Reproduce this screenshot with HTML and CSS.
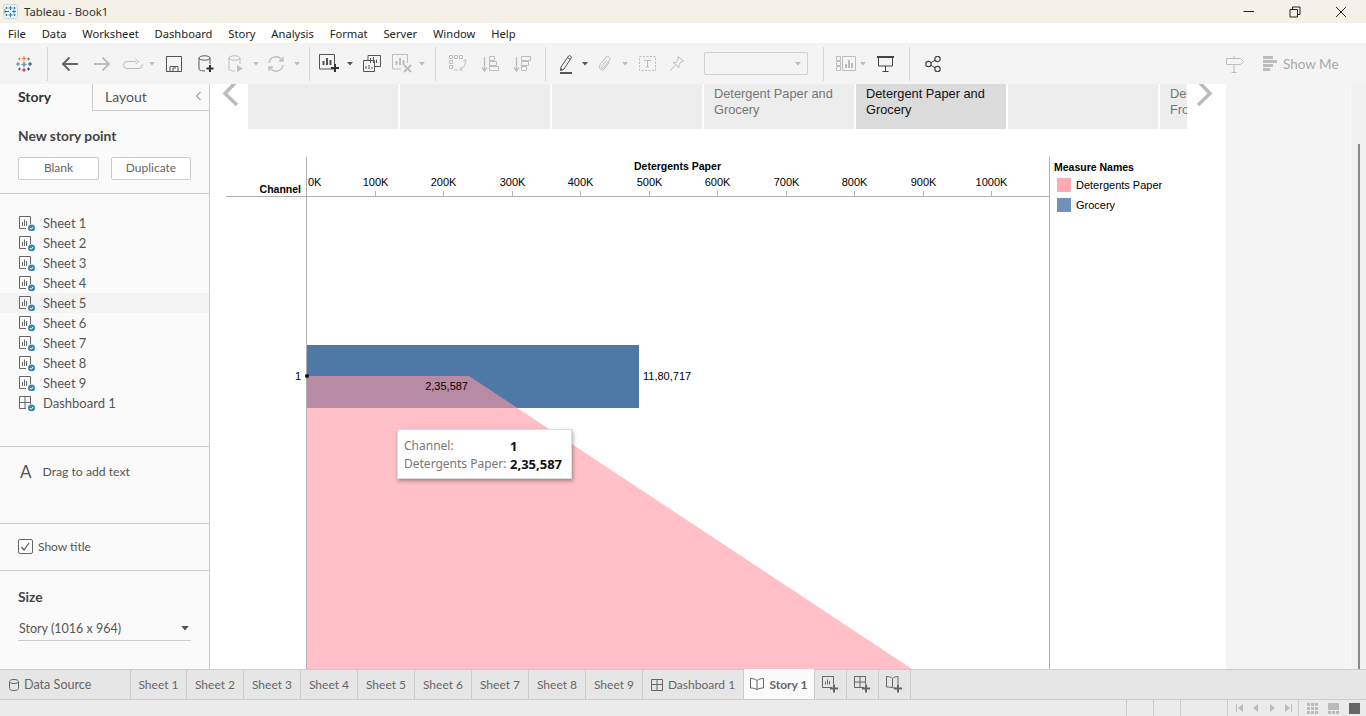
FILE: index.html
```html
<!DOCTYPE html>
<html lang="en">
<head>
  <meta charset="UTF-8">
  <title>Tableau - Book1</title>
  <link rel="stylesheet" href="styles.css">
</head>
<body>
  <svg class="defs" width="0" height="0">
    <defs>
      <symbol id="sheet-ok" viewBox="0 0 18 16">
        <path d="M12.500 9V1.500H1.500V13.500H8" fill="none" stroke="#666"/>
        <path d="M4.500 7v4M6.500 4.500v6.500M8.500 6v5" fill="none" stroke="#666"/>
        <circle cx="13.500" cy="13" r="3.500" fill="#3b84a6"/>
        <path d="M11.800 13l1.300 1.300 2.200-2.400" fill="none" stroke="#fff"/>
      </symbol>
      <symbol id="dash-ok" viewBox="0 0 18 16">
        <path d="M12.500 9V1.500H1.500V13.500H8M7 1.500V13.500M1.500 7.500H12.500" fill="none" stroke="#666"/>
        <circle cx="13.500" cy="13" r="3.500" fill="#3b84a6"/>
        <path d="M11.800 13l1.300 1.300 2.200-2.400" fill="none" stroke="#fff"/>
      </symbol>
      <symbol id="caret" viewBox="0 0 6 4">
        <path d="M0 0h6L3 3.500z" fill="currentColor"/>
      </symbol>
    </defs>
  </svg>

  <header class="titlebar">
    <div class="title">
      <svg class="title-logo" width="15" height="15" viewBox="0 0 15 15">
        <rect x="0.500" y="0.500" width="14" height="14" rx="2" fill="#eef5fa" stroke="#c9dbe6"/>
        <path d="M7.500 2v4M5.500 4h4M7.500 9v4M5.500 11h4M2 7.500h4M2 5.500v4M9 7.500h4M11 5.500v4M3.500 3v2M2.500 4h2M11.500 3v2M10.500 4h2M3.500 10v2M2.500 11h2M11.500 10v2M10.500 11h2" stroke="#2f7fa8" fill="none"/>
      </svg>
      <span>Tableau - Book1</span>
    </div>
    <div class="win-controls">
      <svg width="12" height="12" viewBox="0 0 12 12"><path d="M0.500 5.500H11" stroke="#222" fill="none"/></svg>
      <svg width="12" height="12" viewBox="0 0 12 12"><path d="M1 3.500h7.500v7.500H1zM3.500 3.500V1H11v7.500H8.500" stroke="#222" fill="none"/></svg>
      <svg width="12" height="12" viewBox="0 0 12 12"><path d="M1 1l10 10M11 1L1 11" stroke="#222" fill="none"/></svg>
    </div>
  </header>

  <nav class="menubar">
    <span>File</span><span>Data</span><span>Worksheet</span><span>Dashboard</span><span>Story</span><span>Analysis</span><span>Format</span><span>Server</span><span>Window</span><span>Help</span>
  </nav>

  <div class="toolbar">
    <svg width="18" height="18" viewBox="0 0 18 18">
      <path d="M9 1v5M7 3.500h4" stroke="#e8762b" fill="none"/>
      <path d="M9 7v5M6.500 9.500h5" stroke="#7b8cb0" stroke-width="1.500" fill="none"/>
      <path d="M9 13v4M7 15h4" stroke="#c72035" fill="none"/>
      <path d="M3 7v4M1 9h4" stroke="#59879b" fill="none"/>
      <path d="M15 7v4M13 9h4" stroke="#1f447a" fill="none"/>
      <path d="M4.500 2.500v3M3 4h3" stroke="#eb912b" fill="none"/>
      <path d="M13.500 2.500v3M12 4h3" stroke="#5b879b" fill="none"/>
      <path d="M4.500 12.500v3M3 14h3" stroke="#5c6692" fill="none"/>
      <path d="M13.500 12.500v3M12 14h3" stroke="#1f447a" fill="none"/>
    </svg>
    <i class="sep"></i>
    <svg width="18" height="16" viewBox="0 0 18 16"><path d="M17 8H2M8.500 1.500L2 8l6.500 6.500" stroke="#666" stroke-width="2" fill="none"/></svg>
    <svg width="18" height="16" viewBox="0 0 18 16"><path d="M1 8h15M9.500 1.500L16 8l-6.500 6.500" stroke="#bdbdbd" stroke-width="2" fill="none"/></svg>
    <svg width="20" height="12" viewBox="0 0 20 12"><path d="M13 3.500H4a3 3 0 0 0 0 7h12a3 3 0 0 0 3-3V6M12.500 1l3 2.500-3 2.500" stroke="#bdbdbd" fill="none"/></svg>
    <svg class="caret off" width="6" height="4"><use href="#caret"/></svg>
    <svg width="16" height="16" viewBox="0 0 16 16"><path d="M0.500 0.500h15v15h-15zM4 15.500v-5h8v5M7 15v-3h3" stroke="#555" fill="none"/></svg>
    <svg width="16" height="18" viewBox="0 0 16 18"><ellipse cx="6.500" cy="3" rx="5.500" ry="2.200" stroke="#555" fill="none"/><path d="M1 3v11c0 1 2 2 6 2M12 3v6" stroke="#555" fill="none"/><path d="M12 10v7M8.500 13.500h7" stroke="#333" stroke-width="2" fill="none"/></svg>
    <svg width="16" height="18" viewBox="0 0 16 18"><ellipse cx="6.500" cy="3" rx="5.500" ry="2.200" stroke="#bdbdbd" fill="none"/><path d="M1 3v11c0 1 2 2 6 2M12 3v6" stroke="#bdbdbd" fill="none"/><path d="M9 10l6 3.500-6 3.500z" fill="#bdbdbd"/></svg>
    <svg class="caret off" width="6" height="4"><use href="#caret"/></svg>
    <svg width="18" height="18" viewBox="0 0 18 18"><path d="M2 8a7 7 0 0 1 12-4l2 2M16 10a7 7 0 0 1-12 4l-2-2M16 2v4h-4M2 16v-4h4" stroke="#bdbdbd" stroke-width="1.300" fill="none"/></svg>
    <svg class="caret off" width="6" height="4"><use href="#caret"/></svg>
    <i class="sep"></i>
    <svg width="22" height="19" viewBox="0 0 22 19"><path d="M15.500 15H0.500V0.500H15.500V10" stroke="#555" fill="none"/><path d="M4.500 11V7M8 11V4M11.500 11V6" stroke="#555" stroke-width="2" fill="none"/><path d="M16 10v8M12 14h8" stroke="#333" stroke-width="2" fill="none"/></svg>
    <svg class="caret" width="6" height="4"><use href="#caret"/></svg>
    <svg width="18" height="17" viewBox="0 0 18 17"><path d="M5 5V0.500h12.500v11H12M7.500 8V3M10.500 8V2M13.500 8V4.500" stroke="#555" fill="none"/><path d="M0.500 5.500h11v11h-11zM3 14v-3M6 14v-4M9 14v-2" stroke="#555" fill="none"/></svg>
    <svg width="21" height="19" viewBox="0 0 21 19"><path d="M15.500 9V0.500H0.500V15H9" stroke="#bdbdbd" fill="none"/><path d="M4.500 11V7M8 11V4M11.500 11V6" stroke="#bdbdbd" stroke-width="2" fill="none"/><path d="M12 11l7 7M19 11l-7 7" stroke="#bdbdbd" stroke-width="2" fill="none"/></svg>
    <svg class="caret off" width="6" height="4"><use href="#caret"/></svg>
    <i class="sep"></i>
    <svg width="18" height="18" viewBox="0 0 18 18"><path d="M0.500 0.500h3v3h-3zM5.500 0.500h3v3h-3zM10.500 0.500h3v3h-3zM0.500 5.500h3v3h-3zM0.500 10.500h3v3h-3zM5.500 15h3M16 5c1 4-1 8-5 9.500M13 12l-2 2.500 2.500 1.500M14 6.500L16 4.500l2 2" stroke="#bdbdbd" fill="none"/></svg>
    <svg width="18" height="16" viewBox="0 0 18 16"><path d="M3.500 1v13M1 11.500L3.500 15 6 11.500" stroke="#bdbdbd" stroke-width="1.300" fill="none"/><path d="M8.500 0.500h5v4h-5zM8.500 5.500h7v4h-7zM8.500 10.500h9v4h-9z" stroke="#bdbdbd" fill="none"/></svg>
    <svg width="18" height="16" viewBox="0 0 18 16"><path d="M3.500 1v13M1 11.500L3.500 15 6 11.500" stroke="#bdbdbd" stroke-width="1.300" fill="none"/><path d="M8.500 0.500h9v4h-9zM8.500 5.500h7v4h-7zM8.500 10.500h5v4h-5z" stroke="#bdbdbd" fill="none"/></svg>
    <i class="sep"></i>
    <svg width="14" height="20" viewBox="0 0 14 20"><path d="M2 13L9.500 2c1-1.200 3.500.5 2.700 2L5 15l-3.500 1.500zM8.500 3.500l3 2" stroke="#555" fill="none"/><path d="M1.500 14l3 2-3 .5z" fill="#555"/><path d="M1 19h12" stroke="#555" stroke-width="2" fill="none"/></svg>
    <svg class="caret" width="6" height="4"><use href="#caret"/></svg>
    <svg width="14" height="17" viewBox="0 0 14 17"><path d="M2.500 9L8 2c2-2 5 .5 3.500 3L5.500 13c-1 1.500-3 .5-2-1.200L8.500 5M2.500 9c-3 4 1 8 4 5l5-7" stroke="#bdbdbd" fill="none"/></svg>
    <svg class="caret off" width="6" height="4"><use href="#caret"/></svg>
    <svg width="17" height="15" viewBox="0 0 17 15"><rect x="0.500" y="0.500" width="16" height="14" fill="none" stroke="#bdbdbd" stroke-dasharray="2 1.500"/><path d="M5 4.500h7M8.500 4.500v6.500M7 11h3" stroke="#bdbdbd" fill="none"/></svg>
    <svg width="14" height="15" viewBox="0 0 14 15"><path d="M8 0.500l5.500 4.500-2 .5-2.500 3v3L3 6.500h3L8 3.500zM5 9.500L0.500 14.500" stroke="#bdbdbd" fill="none"/></svg>
    <div class="fit-combo"><svg class="caret off" width="6" height="4"><use href="#caret"/></svg></div>
    <i class="sep"></i>
    <svg width="20" height="15" viewBox="0 0 20 15"><path d="M0.500 0.500h4v4h-4zM0.500 5.500h4v4h-4zM0.500 10.500h4v4h-4zM6.500 0.500h13v14h-13z" stroke="#bdbdbd" fill="none"/><path d="M10 12V8M13 12V4M16 12V7" stroke="#bdbdbd" stroke-width="2" fill="none"/></svg>
    <svg class="caret off" width="6" height="4"><use href="#caret"/></svg>
    <svg width="17" height="16" viewBox="0 0 17 16"><path d="M0 0.500h17M1.500 1v9h14V1M8.500 10v5M5.500 15.500h6" stroke="#444" fill="none"/><path d="M0 1h17v1H0z" fill="#444"/></svg>
    <i class="sep"></i>
    <svg width="16" height="16" viewBox="0 0 16 16"><circle cx="3.500" cy="8" r="2.700" fill="none" stroke="#444" stroke-width="1.200"/><circle cx="12.500" cy="3" r="2.700" fill="none" stroke="#444" stroke-width="1.200"/><circle cx="12.500" cy="13" r="2.700" fill="none" stroke="#444" stroke-width="1.200"/><path d="M5.800 6.700l4.400-2.400M5.800 9.300l4.400 2.400" stroke="#444" fill="none"/></svg>
    <span></span>
    <svg width="18" height="18" viewBox="0 0 18 18"><path d="M0.500 3.500h14l3 3-3 3H0.500zM8 1v2.500M8 9.500V17M5.500 17.500h5" stroke="#bdbdbd" fill="none"/></svg>
    <div class="show-me">
      <svg width="14" height="15" viewBox="0 0 14 15"><path d="M0 0h10v3H0zM0 4h14v3H0zM0 8h10v3H0zM0 12h7v3H0z" fill="#bdbdbd"/></svg>
      <span>Show Me</span>
    </div>
  </div>

  <div class="main">
    <aside class="sidebar">
      <div class="side-tabs">
        <div class="side-tab on">Story</div>
        <div class="side-tab">Layout
          <svg width="7" height="10" viewBox="0 0 7 10"><path d="M5.500 1L1.500 5l4 4" stroke="#666" fill="none"/></svg>
        </div>
      </div>

      <section class="side-new">
        <h3>New story point</h3>
        <div class="side-btns">
          <button>Blank</button>
          <button>Duplicate</button>
        </div>
      </section>

      <ul class="sheet-list">
        <li><svg width="18" height="16"><use href="#sheet-ok"/></svg>Sheet 1</li>
        <li><svg width="18" height="16"><use href="#sheet-ok"/></svg>Sheet 2</li>
        <li><svg width="18" height="16"><use href="#sheet-ok"/></svg>Sheet 3</li>
        <li><svg width="18" height="16"><use href="#sheet-ok"/></svg>Sheet 4</li>
        <li class="hover"><svg width="18" height="16"><use href="#sheet-ok"/></svg>Sheet 5</li>
        <li><svg width="18" height="16"><use href="#sheet-ok"/></svg>Sheet 6</li>
        <li><svg width="18" height="16"><use href="#sheet-ok"/></svg>Sheet 7</li>
        <li><svg width="18" height="16"><use href="#sheet-ok"/></svg>Sheet 8</li>
        <li><svg width="18" height="16"><use href="#sheet-ok"/></svg>Sheet 9</li>
        <li><svg width="18" height="16"><use href="#dash-ok"/></svg>Dashboard 1</li>
      </ul>

      <section class="side-text">
        <span class="big-a">A</span>
        <span>Drag to add text</span>
      </section>

      <section class="side-title">
        <svg width="15" height="15" viewBox="0 0 15 15"><rect x="0.500" y="0.500" width="14" height="14" rx="1.500" fill="#fff" stroke="#666"/><path d="M3.500 8l2.500 3 5-7" stroke="#555" stroke-width="1.200" fill="none"/></svg>
        <span>Show title</span>
      </section>

      <section class="side-size">
        <h3>Size</h3>
        <div class="size-select">
          <span>Story (1016 x 964)</span>
          <svg class="caret" width="8" height="5"><use href="#caret"/></svg>
        </div>
      </section>
    </aside>

    <div class="canvas">
      <div class="story-nav">
        <svg class="nav-arrow" width="18" height="22" viewBox="0 0 18 22"><path d="M15 -3L3 9.500 15 21" stroke="#bbb" stroke-width="3.500" fill="none"/></svg>
        <div class="points">
          <div class="point"></div>
          <div class="point"></div>
          <div class="point"></div>
          <div class="point">Detergent Paper and Grocery</div>
          <div class="point on">Detergent Paper and Grocery</div>
          <div class="point"></div>
          <div class="point">Delicassen and Frozen</div>
        </div>
        <svg class="nav-arrow" width="18" height="22" viewBox="0 0 18 22"><path d="M3 -3L15 9.500 3 21" stroke="#bbb" stroke-width="3.500" fill="none"/></svg>
      </div>

      <div class="viz">
        <svg class="chart" width="1016" height="539" viewBox="210 130 1016 539">
          <rect x="307" y="345" width="332" height="63" fill="#4e79a7"/>
          <path d="M307 376H469L912 669H307Z" fill="#ff97a2" fill-opacity="0.600"/>
          <path d="M306.500 157V669M1049.500 157V669M226 196.500H1049" stroke="#b0b0b0" fill="none"/>
          <path d="M375.500 191v5M443.500 191v5M512.500 191v5M580.500 191v5M649.500 191v5M717.500 191v5M786.500 191v5M854.500 191v5M923.500 191v5M991.500 191v5" stroke="#b0b0b0" fill="none"/>
          <circle cx="307" cy="376" r="2" fill="#111"/>
          <g class="lbl">
            <text class="b" x="677.500" y="170" text-anchor="middle">Detergents Paper</text>
            <text class="b" x="301" y="193" text-anchor="end">Channel</text>
            <text x="308" y="186">0K</text>
            <text x="375.500" y="186" text-anchor="middle">100K</text>
            <text x="443.500" y="186" text-anchor="middle">200K</text>
            <text x="512.500" y="186" text-anchor="middle">300K</text>
            <text x="580.500" y="186" text-anchor="middle">400K</text>
            <text x="649.500" y="186" text-anchor="middle">500K</text>
            <text x="717.500" y="186" text-anchor="middle">600K</text>
            <text x="786.500" y="186" text-anchor="middle">700K</text>
            <text x="854.500" y="186" text-anchor="middle">800K</text>
            <text x="923.500" y="186" text-anchor="middle">900K</text>
            <text x="991.500" y="186" text-anchor="middle">1000K</text>
            <text x="301" y="380" text-anchor="end">1</text>
            <text x="643" y="380">11,80,717</text>
            <text x="468" y="390" text-anchor="end">2,35,587</text>
            <text class="b" x="1054" y="171">Measure Names</text>
            <text x="1076" y="189">Detergents Paper</text>
            <text x="1076" y="209">Grocery</text>
          </g>
          <rect x="1057" y="178" width="14" height="14" fill="#ffaab5"/>
          <rect x="1057" y="198" width="14" height="14" fill="#7092b8"/>
        </svg>
        <div class="tooltip">
          <span>Channel:</span><b>1</b>
          <span>Detergents Paper:</span><b>2,35,587</b>
        </div>
      </div>
    </div>

    <div class="gutter">
      <div class="scroll-track"><div class="scroll-thumb"></div></div>
    </div>
  </div>

  <div class="tabbar">
    <div class="tab source">
      <svg width="10" height="12" viewBox="0 0 10 12"><path d="M0.500 2.500v7c0 1 1.500 2 4.500 2s4.500-1 4.500-2v-7c0-1-1.500-2-4.500-2s-4.500 1-4.500 2c0 1 1.500 2 4.500 2s4.500-1 4.500-2" stroke="#666" fill="none"/></svg>
      Data Source
    </div>
    <div class="tab">Sheet 1</div>
    <div class="tab">Sheet 2</div>
    <div class="tab">Sheet 3</div>
    <div class="tab">Sheet 4</div>
    <div class="tab">Sheet 5</div>
    <div class="tab">Sheet 6</div>
    <div class="tab">Sheet 7</div>
    <div class="tab">Sheet 8</div>
    <div class="tab">Sheet 9</div>
    <div class="tab dash">
      <svg width="12" height="12" viewBox="0 0 12 12"><path d="M0.500 0.500h11v11h-11zM6 0.500v11M0.500 5.500h11" stroke="#666" fill="none"/></svg>
      Dashboard 1
    </div>
    <div class="tab story on">
      <svg width="14" height="12" viewBox="0 0 14 12"><path d="M7 2.500C5 1 3 0.500 0.500 0.500v9.500C3 10 5 10.500 7 11.500c2-1 4-1.500 6.500-1.500V0.500C11 0.500 9 1 7 2.500zM7 2.500v9" stroke="#666" fill="none"/></svg>
      Story 1
    </div>
    <div class="tab add">
      <svg width="17" height="17" viewBox="0 0 17 17"><path d="M10 11.500H0.500V0.500H11.500V8M3.500 8.500V5.500M5.500 8.500V3.500M7.500 8.500V5" stroke="#666" fill="none"/><path d="M12 8.500v8M8 12.500h8" stroke="#666" stroke-width="2" fill="none"/></svg>
    </div>
    <div class="tab add">
      <svg width="17" height="17" viewBox="0 0 17 17"><path d="M10 11.500H0.500V0.500H11.500V8M6 0.500v11M0.500 6h11" stroke="#666" fill="none"/><path d="M12 8.500v8M8 12.500h8" stroke="#666" stroke-width="2" fill="none"/></svg>
    </div>
    <div class="tab add">
      <svg width="17" height="17" viewBox="0 0 17 17"><path d="M10 12.500C7 11.500 3 11 0.500 11V0.500C3 0.500 5 1 6.500 2.500 8 1 9.500 0.500 12 0.500V8M6.500 2.500v9" stroke="#666" fill="none"/><path d="M12 8.500v8M8 12.500h8" stroke="#666" stroke-width="2" fill="none"/></svg>
    </div>
  </div>

  <footer class="statusbar">
    <div class="cell w27"></div>
    <div class="cell w27"></div>
    <div class="cell w47"></div>
    <div class="cell pager">
      <svg width="8" height="8" viewBox="0 0 8 8"><path d="M0.500 0v8" stroke="#bbb" fill="none"/><path d="M7 0v8L2 4z" fill="#bbb"/></svg>
      <svg width="8" height="8" viewBox="0 0 8 8"><path d="M6 0v8L1 4z" fill="#bbb"/></svg>
      <svg width="8" height="8" viewBox="0 0 8 8"><path d="M2 0v8l5-4z" fill="#bbb"/></svg>
      <svg width="8" height="8" viewBox="0 0 8 8"><path d="M7.500 0v8" stroke="#bbb" fill="none"/><path d="M1 0v8l5-4z" fill="#bbb"/></svg>
    </div>
    <div class="cell views">
      <svg width="11" height="11" viewBox="0 0 11 11"><path d="M0 0h3v3H0zM4 0h3v3H4zM8 0h3v3H8zM0 4h3v3H0zM4 4h3v3H4zM8 4h3v3H8zM0 8h3v3H0zM4 8h3v3H4zM8 8h3v3H8z" fill="#bbb"/></svg>
      <svg width="11" height="11" viewBox="0 0 11 11"><path d="M0 0h11v7H0zM0 8h3v3H0zM4 8h3v3H4zM8 8h3v3H8z" fill="#bbb"/></svg>
      <svg width="11" height="11" viewBox="0 0 11 11"><path d="M0 0h11v11H0z" fill="#666"/></svg>
    </div>
  </footer>
</body>
</html>
```

FILE: styles.css
```css
* {
  box-sizing: border-box;
}
html, body {
  margin: 0;
  height: 100%;
  overflow: hidden;
}
body {
  display: flex;
  flex-direction: column;
  font-family: Lato, "Noto Sans", sans-serif;
  color: #555;
  background-color: #fff;
}
.defs {
  position: absolute;
}

/* window chrome */
.titlebar {
  height: 23px;
  flex: none;
  display: flex;
  justify-content: space-between;
  align-items: center;
  background-color: #f5f1e7;
  font-family: "Noto Sans", sans-serif;
  font-size: 11.300px;
  color: #333;
}
.title {
  display: flex;
  align-items: center;
  gap: 6px;
  padding-left: 3px;
}
.win-controls {
  display: flex;
  gap: 34px;
  padding-right: 19px;
}
.menubar {
  height: 20px;
  flex: none;
  display: flex;
  align-items: center;
  padding-left: 8px;
  gap: 15.800px;
  font-family: "Noto Sans", sans-serif;
  font-size: 11.200px;
  color: #222;
}

/* toolbar, one track per control */
.toolbar {
  height: 41px;
  flex: none;
  display: grid;
  grid-template-columns: 32px 14px 32px 32px 29px 10px 34px 30px 30px 10px 30px 12px 12px 30px 10px 33px 29px 10px 16px 30px 34px 30px 16px 26px 12px 28px 12px 33px 26px 124px 18px 28px 6px 39px 8px 39px 1fr 38px 112px;
  align-items: center;
  justify-items: center;
  padding-left: 8px;
  background-color: #f4f4f4;
}
.sep {
  width: 1px;
  height: 34px;
  background-color: #d6d6d6;
}
.caret {
  color: #555;
}
.caret.off {
  color: #bdbdbd;
}
.fit-combo {
  justify-self: start;
  margin-left: 14px;
  width: 104px;
  height: 23px;
  display: flex;
  align-items: center;
  justify-content: flex-end;
  padding-right: 6px;
  border: 1px solid #d0d0d0;
  border-radius: 2px;
  background-color: #f4f4f4;
}
.show-me {
  justify-self: start;
  display: flex;
  align-items: center;
  gap: 6px;
  margin-left: 9px;
  font-size: 13.500px;
  color: #a9a9a9;
}

/* main */
.main {
  height: 585px;
  flex: none;
  display: flex;
}
.sidebar {
  width: 210px;
  flex: none;
  display: flex;
  flex-direction: column;
  background-color: #fafafa;
  border-right: 1px solid #ccc;
  font-size: 13px;
}
.side-tabs {
  height: 27px;
  flex: none;
  display: flex;
}
.side-tab {
  flex: 1;
  display: flex;
  align-items: center;
  justify-content: space-between;
  padding: 0 7px 2px 12px;
  border-left: 1px solid #ccc;
  border-bottom: 1px solid #ccc;
  font-size: 14px;
  color: #555;
}
.side-tab.on {
  flex: none;
  width: 92px;
  padding-left: 18px;
  border: none;
  font-weight: 700;
  color: #333;
}
h3 {
  margin: 0;
  font-size: 13.800px;
  font-weight: 700;
  color: #444;
}
.side-new {
  height: 83px;
  flex: none;
  padding: 16px 18px 0;
  border-bottom: 1px solid #ccc;
}
.side-btns {
  display: flex;
  gap: 12px;
  margin-top: 13px;
}
.side-btns button {
  height: 23px;
  width: 81px;
  padding: 0 0 2px;
  font-family: inherit;
  font-size: 12px;
  color: #666;
  background-color: #fff;
  border: 1px solid #ccc;
  border-radius: 2px;
}
.side-btns button + button {
  width: 80px;
}
.sheet-list {
  height: 253px;
  flex: none;
  margin: 0;
  padding: 19px 0 0;
  list-style: none;
  border-bottom: 1px solid #ccc;
}
.sheet-list li {
  height: 20px;
  display: flex;
  align-items: center;
  gap: 7px;
  padding-left: 18px;
}
.sheet-list li.hover {
  background-color: #f3f3f3;
}
.side-text {
  height: 77px;
  flex: none;
  display: flex;
  gap: 11px;
  padding: 15px 0 0 20px;
  border-bottom: 1px solid #ccc;
  font-size: 12.200px;
}
.big-a {
  font-size: 17px;
  line-height: 20px;
}
.side-text span:last-child {
  line-height: 20px;
}
.side-title {
  height: 47px;
  flex: none;
  display: flex;
  align-items: center;
  gap: 5px;
  padding: 0 0 2px 18px;
  border-bottom: 1px solid #ccc;
  font-size: 12px;
}
.side-size {
  flex: 1;
  padding: 17px 18px 0;
}
.size-select {
  height: 24px;
  margin-top: 12px;
  padding: 0 2px 1px 1px;
  display: flex;
  align-items: center;
  justify-content: space-between;
  border-bottom: 1px solid #ccc;
  font-size: 12.500px;
}

/* story canvas */
.canvas {
  width: 1016px;
  flex: none;
  display: flex;
  flex-direction: column;
  background-color: #fff;
}
.story-nav {
  height: 46px;
  flex: none;
  display: flex;
  align-items: flex-start;
  padding-left: 12px;
}
.nav-arrow {
  flex: none;
  margin-right: 8px;
}
.points {
  width: 939px;
  flex: none;
  display: flex;
  gap: 2px;
  overflow: hidden;
  margin-right: 8px;
}
.point {
  width: 150px;
  height: 45px;
  flex: none;
  padding: 2px 10px 0;
  overflow: hidden;
  background-color: #ededed;
  font-family: "Liberation Sans", sans-serif;
  font-size: 12.800px;
  line-height: 16px;
  color: #777;
}
.point.on {
  background-color: #dbdbdb;
  color: #111;
}
.viz {
  position: relative;
  flex: 1;
}
.chart {
  display: block;
}
.lbl text {
  font-family: "Liberation Sans", sans-serif;
  font-size: 11px;
  fill: #000;
}
.lbl .b {
  font-size: 10.500px;
  font-weight: 700;
}
.tooltip {
  position: absolute;
  left: 187px;
  top: 299px;
  width: 175px;
  height: 50px;
  display: grid;
  grid-template-columns: 106px auto;
  align-content: center;
  padding: 2px 0 0 6px;
  background-color: #fff;
  border: 1px solid #ddd;
  box-shadow: 1px 2px 4px rgba(0, 0, 0, 0.35);
  font-family: "Noto Sans", sans-serif;
  font-size: 12px;
  line-height: 18px;
  color: #777;
}
.tooltip b {
  font-size: 13px;
  color: #111;
}
.gutter {
  flex: 1;
  display: flex;
  justify-content: flex-end;
  background-color: #f4f4f4;
}
.scroll-track {
  width: 16px;
  padding: 60px 0 0 7px;
  background-color: #f1f1f1;
  border-left: 1px solid #fafafa;
}
.scroll-thumb {
  width: 2px;
  height: 100%;
  background-color: #8a8a8a;
}

/* sheet tabs and status */
.tabbar {
  height: 31px;
  flex: none;
  display: flex;
  background-color: #e6e6e6;
  border-top: 1px solid #ccc;
  border-bottom: 1px solid #ccc;
  font-size: 12px;
  color: #666;
}
.tab {
  width: 57px;
  flex: none;
  display: flex;
  align-items: center;
  justify-content: center;
  gap: 5px;
  border-right: 1px solid #ccc;
}
.tab.source {
  width: 131px;
  justify-content: flex-start;
  padding-left: 9px;
  font-size: 12.600px;
}
.tab.source + .tab {
  width: 56px;
}
.tab.dash {
  width: 101px;
}
.tab.story {
  width: 71px;
}
.tab.on {
  background-color: #fafafa;
  font-weight: 700;
  margin-top: -1px;
}
.tab.add {
  width: 32px;
}
.statusbar {
  flex: 1;
  display: flex;
  justify-content: flex-end;
  background-color: #ebebeb;
}
.cell {
  display: flex;
  align-items: center;
  border-left: 1px solid #ccc;
}
.w27 {
  width: 27px;
}
.w47 {
  width: 47px;
}
.pager {
  width: 71px;
  gap: 8px;
  padding-left: 8px;
}
.views {
  width: 68px;
  gap: 10px;
  padding-left: 8px;
}
```
